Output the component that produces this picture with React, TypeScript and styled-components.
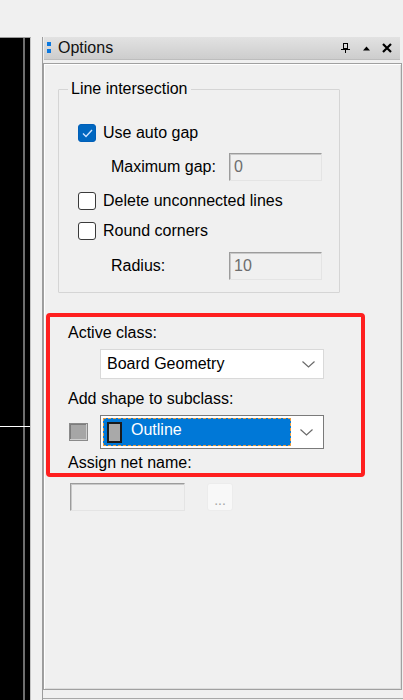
import styled, { createGlobalStyle } from 'styled-components'

const GlobalStyle = createGlobalStyle`
  html, body {
    margin: 0;
    padding: 0;
    background: #f0f0f0;
  }
  body {
    font-family: "Liberation Sans", Arial, sans-serif;
    font-size: 16px;
    color: #000;
  }
  * {
    box-sizing: border-box;
  }
`

const Screen = styled.div`
  display: flex;
  width: 403px;
  height: 700px;
  overflow: hidden;
  background: #f0f0f0;
`

const CanvasStrip = styled.div`
  flex: 0 0 31px;
  margin-top: 37px;
  display: flex;
  flex-direction: column;
  border-top: 1px solid #9a9a9a;
  border-right: 1px solid #c4c4c4;
  background: linear-gradient(to right, #000 23px, #6e6e6e 23px, #6e6e6e 25px, #000 25px);
`

const CanvasGuide = styled.div`
  height: 389px;
  border-bottom: 1px solid #fff;
`

const Panel = styled.div`
  flex: 1;
  margin-left: 11px;
  margin-top: 37px;
  display: flex;
  flex-direction: column;
  border-left: 1px solid #9c9c9c;
`

const Header = styled.div`
  height: 23px;
  margin: 0 3px 0 1px;
  display: flex;
  align-items: center;
  padding-left: 3px;
  background: linear-gradient(#e2e2e2, #cdcdcd);
  border-bottom: 1px solid #bdbdbd;
`

const Grip = styled.div`
  width: 4px;
  display: flex;
  flex-direction: column;
  gap: 3px;
  margin-top: -2px;

  span {
    display: block;
    width: 4px;
    height: 4px;
    background: #0a78e0;
  }
`

const Title = styled.div`
  margin-left: 7px;
  flex: 1;
  line-height: 18px;
  color: #111;
`

const HeaderTools = styled.div`
  display: flex;
  align-items: center;
  gap: 12px;
  padding-right: 8px;

  svg {
    display: block;
  }
`

const Body = styled.div`
  margin-top: 3px;
  height: 627px;
  margin-right: 1px;
  border: 1px solid #a0a0a0;
  box-shadow: inset 1px 1px 0 #fff, inset -1px -1px 0 #dcdcdc;
  display: flex;
  flex-direction: column;
  align-items: flex-start;
`

const NextPanelEdge = styled.div`
  flex: 1;
  margin-top: 8px;
  border-top: 1px solid #a8a8a8;
`

const GroupBox = styled.fieldset`
  margin: 16px 0 0 14px;
  width: 282px;
  height: 213px;
  padding: 0 0 0 19px;
  border: 1px solid #d5d5d5;
  border-radius: 1px;
  display: flex;
  flex-direction: column;
`

const GroupTitle = styled.legend`
  margin-left: -10px;
  padding: 0 3px;
  line-height: 18px;
`

const CheckRow = styled.div<{ $top: number }>`
  display: flex;
  align-items: center;
  gap: 7px;
  height: 20px;
  margin-top: ${p => p.$top}px;
  line-height: 18px;
`

const CheckBox = styled.span<{ $checked?: boolean }>`
  width: 18px;
  height: 18px;
  flex-shrink: 0;
  border-radius: 3px;
  border: 1.5px solid ${p => (p.$checked ? '#005fb8' : '#3a3a3a')};
  background: ${p => (p.$checked ? '#0067c0' : '#fff')};
  display: flex;
  align-items: center;
  justify-content: center;
`

const FieldRow = styled.div<{ $top: number }>`
  display: flex;
  align-items: center;
  margin-top: ${p => p.$top}px;
  padding-left: 33px;
`

const FieldLabel = styled.span`
  width: 118px;
  line-height: 18px;
`

const DisabledInput = styled.div<{ $width: number }>`
  width: ${p => p.$width}px;
  height: 28px;
  padding: 0 4px;
  display: flex;
  align-items: center;
  background: #f0f0f0;
  border: 1px solid;
  border-color: #9c9c9c #e4e4e4 #e4e4e4 #9c9c9c;
  box-shadow: inset 1px 1px 0 #c9c9c9;
  color: #6d6d6d;
`

const Highlight = styled.section`
  margin: 20px 0 0 2px;
  width: 319px;
  padding: 7px 0 1px 18px;
  border: 4px solid #ff1f1f;
  border-radius: 4px;
  display: flex;
  flex-direction: column;
  align-items: flex-start;
`

const SectionLabel = styled.div<{ $top?: number }>`
  line-height: 18px;
  margin-top: ${p => p.$top ?? 0}px;
`

const Combo = styled.div<{ $focused?: boolean }>`
  width: 224px;
  height: ${p => (p.$focused ? 34 : 30)}px;
  margin-left: ${p => (p.$focused ? 0 : 32)}px;
  margin-top: ${p => (p.$focused ? 0 : 7)}px;
  display: flex;
  align-items: center;
  padding: ${p => (p.$focused ? '2px' : '0 0 0 6px')};
  background: #fff;
  border: 1px solid ${p => (p.$focused ? '#7a7a7a' : '#d9d9d9')};
`

const ComboText = styled.span`
  flex: 1;
  line-height: 18px;
`

const Chevron = styled.span`
  width: 30px;
  display: flex;
  justify-content: center;
  flex-shrink: 0;
`

const Selection = styled.div`
  flex: 1;
  align-self: stretch;
  display: flex;
  align-items: center;
  padding-left: 3px;
  background: #0078d7;
  border: 1px dashed #e8993c;
  color: #fff;
`

const Swatch = styled.span`
  width: 15px;
  height: 21px;
  background: #a9a9a9;
  border: 2px solid #1a1a1a;
  flex-shrink: 0;
`

const SelectionText = styled.span`
  margin-left: 9px;
  margin-top: -5px;
  line-height: 18px;
`

const SubclassRow = styled.div`
  display: flex;
  align-items: center;
  gap: 12px;
  margin-top: 7px;
`

const ColorBox = styled.span`
  width: 19px;
  height: 18px;
  margin-left: 1px;
  background: #a6a6a6;
  border: 1px solid #8a8a8a;
  box-shadow: inset -1px -1px 0 #cfcfcf, inset 1px 1px 0 #7c7c7c;
`

const NetRow = styled.div`
  display: flex;
  align-items: center;
  gap: 22px;
  margin: 6px 0 0 26px;
`

const BrowseButton = styled.div`
  width: 26px;
  height: 28px;
  border-radius: 3px;
  background: #f8f8f8;
  border: 1px solid #ececec;
  color: #a6a6a6;
  font-size: 14px;
  display: flex;
  justify-content: center;
  align-items: flex-end;
  padding-bottom: 5px;
  line-height: 10px;
`

function ChevronIcon() {
  return (
    <svg width="13" height="7" viewBox="0 0 13 7">
      <path d="M0.5 0.5 L6.5 6 L12.5 0.5" fill="none" stroke="#6a6a6a" strokeWidth="1.2" />
    </svg>
  )
}

export default function App() {
  return (
    <Screen>
      <GlobalStyle />
      <CanvasStrip>
        <CanvasGuide />
      </CanvasStrip>

      <Panel>
        <Header>
          <Grip>
            <span />
            <span />
          </Grip>
          <Title>Options</Title>
          <HeaderTools>
            <svg width="10" height="10" viewBox="0 0 10 10">
              <rect x="2.5" y="0.5" width="4" height="5" fill="none" stroke="#000" />
              <path d="M0 6.5 H9 M4.5 6.5 V10" stroke="#000" strokeWidth="1" />
            </svg>
            <svg width="7" height="5" viewBox="0 0 7 5">
              <path d="M0 4.5 L3.5 0.5 L7 4.5 Z" fill="#000" />
            </svg>
            <svg width="10" height="10" viewBox="0 0 10 10">
              <path d="M1 1 L9 9 M9 1 L1 9" stroke="#000" strokeWidth="2.2" />
            </svg>
          </HeaderTools>
        </Header>

        <Body>
          <GroupBox>
            <GroupTitle>Line intersection</GroupTitle>
            <CheckRow $top={25}>
              <CheckBox $checked>
                <svg width="11" height="9" viewBox="0 0 11 9">
                  <path d="M1 4.5 L4 7.5 L10 1" fill="none" stroke="#cfe4ff" strokeWidth="1.4" />
                </svg>
              </CheckBox>
              Use auto gap
            </CheckRow>
            <FieldRow $top={10}>
              <FieldLabel>Maximum gap:</FieldLabel>
              <DisabledInput $width={93}>0</DisabledInput>
            </FieldRow>
            <CheckRow $top={10}>
              <CheckBox />
              Delete unconnected lines
            </CheckRow>
            <CheckRow $top={10}>
              <CheckBox />
              Round corners
            </CheckRow>
            <FieldRow $top={11}>
              <FieldLabel>Radius:</FieldLabel>
              <DisabledInput $width={93}>10</DisabledInput>
            </FieldRow>
          </GroupBox>

          <Highlight>
            <SectionLabel>Active class:</SectionLabel>
            <Combo>
              <ComboText>Board Geometry</ComboText>
              <Chevron>
                <ChevronIcon />
              </Chevron>
            </Combo>
            <SectionLabel $top={11}>Add shape to subclass:</SectionLabel>
            <SubclassRow>
              <ColorBox />
              <Combo $focused>
                <Selection>
                  <Swatch />
                  <SelectionText>Outline</SelectionText>
                </Selection>
                <Chevron>
                  <ChevronIcon />
                </Chevron>
              </Combo>
            </SubclassRow>
            <SectionLabel $top={5}>Assign net name:</SectionLabel>
          </Highlight>

          <NetRow>
            <DisabledInput $width={115} />
            <BrowseButton>...</BrowseButton>
          </NetRow>
        </Body>
        <NextPanelEdge />
      </Panel>
    </Screen>
  )
}
